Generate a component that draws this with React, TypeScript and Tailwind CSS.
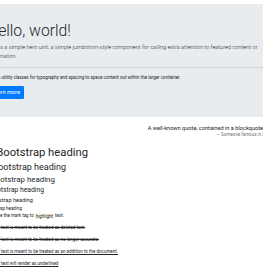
export default function App() {
  return (
    <div className="w-[263px] h-[269px] overflow-hidden bg-white text-[#212529] font-['Roboto',sans-serif] text-[4.5px] leading-[6.75px]">
      <div className="ml-[-22px] w-[308px] pt-[4px]">
        <div className="bg-[#e9ecef] rounded-[1.35px] px-[9px] pt-[18px] pb-[18px] mb-[7px]">
          <h1 className="text-[15.75px] leading-[18.9px] font-light mb-[2.25px]">Hello, world!</h1>
          <p className="text-[5.625px] leading-[8.4375px] font-light mb-[4.5px]">
            This is a simple hero unit, a simple jumbotron-style component for calling extra attention to featured content or information.
          </p>
          <hr className="my-[6.75px] border-0 border-t border-[rgba(0,0,0,0.1)]" />
          <p className="mb-[4.5px]">It uses utility classes for typography and spacing to space content out within the larger container.</p>
          <a className="block w-fit bg-[#007bff] text-white text-[5.625px] leading-[8.4375px] px-[4.5px] py-[2.25px] rounded-[1.35px]">
            Learn more
          </a>
        </div>

        <blockquote className="text-right text-[5.625px] leading-[8.4375px] mb-[7px]">
          <p>A well-known quote, contained in a blockquote element.</p>
          <footer className="text-[4.5px] leading-[6.75px] text-[#6c757d]">
            {"\u2014\u00a0"}Someone famous in <cite className="not-italic">Source Title</cite>
          </footer>
        </blockquote>

        <h1 className="text-[11.25px] leading-[13.5px] font-normal mb-[2.25px]">h1. Bootstrap heading</h1>
        <h2 className="text-[9px] leading-[10.8px] font-normal mb-[2.25px]">h2. Bootstrap heading</h2>
        <h3 className="text-[7.875px] leading-[9.45px] font-normal mb-[2.25px]">h3. Bootstrap heading</h3>
        <h4 className="text-[6.75px] leading-[8.1px] font-normal mb-[2.25px]">h4. Bootstrap heading</h4>
        <h5 className="text-[5.625px] leading-[6.75px] font-normal mb-[2.25px]">h5. Bootstrap heading</h5>
        <h6 className="text-[4.5px] leading-[5.4px] font-normal mb-[2.25px]">h6. Bootstrap heading</h6>

        <p className="mb-[5.25px]">
          You can use the mark tag to <mark className="bg-[#fcf8e3] text-[#212529] p-[0.9px]">highlight</mark> text.
        </p>
        <p className="mb-[5.25px]">
          <del>This line of text is meant to be treated as deleted text.</del>
        </p>
        <p className="mb-[5.25px]">
          <s>This line of text is meant to be treated as no longer accurate.</s>
        </p>
        <p className="mb-[5.25px]">
          <ins className="underline">This line of text is meant to be treated as an addition to the document.</ins>
        </p>
        <p className="mb-[5.25px]">
          <u>This line of text will render as underlined</u>
        </p>
        <p className="mb-[5.25px]">
          <small className="text-[80%]">This line of text is meant to be treated as fine print.</small>
        </p>
        <p className="mb-[5.25px]">
          <strong>This line rendered as bold text.</strong>
        </p>
      </div>
    </div>
  );
}
